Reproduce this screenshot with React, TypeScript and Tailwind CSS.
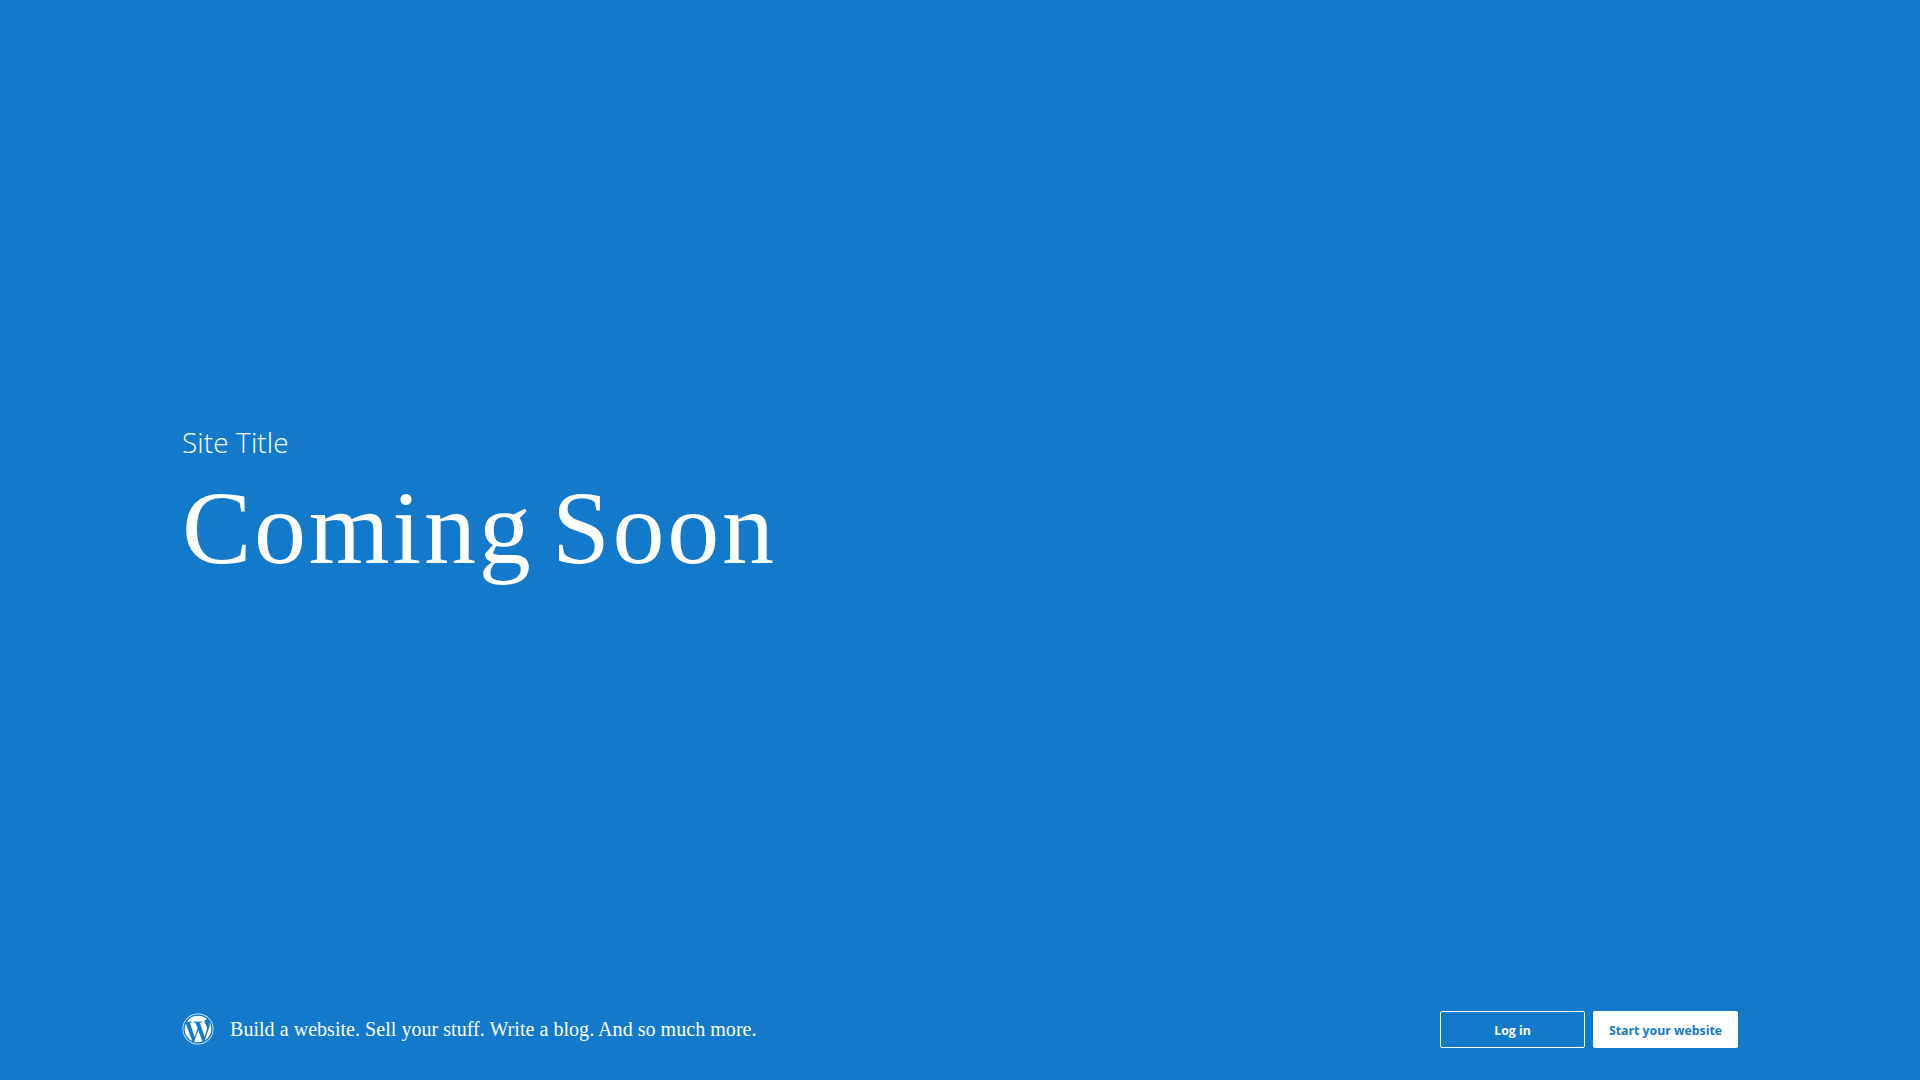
import React from "react";
import { FaWordpress } from "react-icons/fa";

const App: React.FC = () => {
    return (
        <div className="flex h-screen w-full flex-col overflow-hidden bg-[#137ACB] px-[182px] text-white">
            {/* Hero */}
            <main className="flex flex-1 flex-col justify-center">
                <p className="font-['Open_Sans',sans-serif] text-[28px] font-light leading-[36px] tracking-[0.1px]">Site Title</p>
                <h1 className="mt-[8px] font-['Liberation_Serif',serif] text-[104px] leading-[120px] tracking-[2.7px] [word-spacing:-10px]">Coming Soon</h1>
            </main>

            {/* Footer */}
            <footer className="flex items-center justify-between pb-[32px]">
                <div className="flex items-center gap-[16px]">
                    <FaWordpress className="h-[32px] w-[32px] -translate-y-px" />
                    <span className="-translate-y-px font-['Liberation_Serif',serif] text-[20px] leading-[28px] tracking-[0.04px]">
                        Build a website. Sell your stuff. Write a blog. And so much more.
                    </span>
                </div>
                <div className="flex gap-[8px] font-['Open_Sans',sans-serif] text-[12.3px] font-bold">
                    <button className="h-[37px] w-[145px] rounded-[2px] border border-white pt-[3px]">Log in</button>
                    <button className="h-[37px] w-[145px] rounded-[2px] bg-white pt-[3px] text-[#137ACB]">Start your website</button>
                </div>
            </footer>
        </div>
    );
};

export default App;
